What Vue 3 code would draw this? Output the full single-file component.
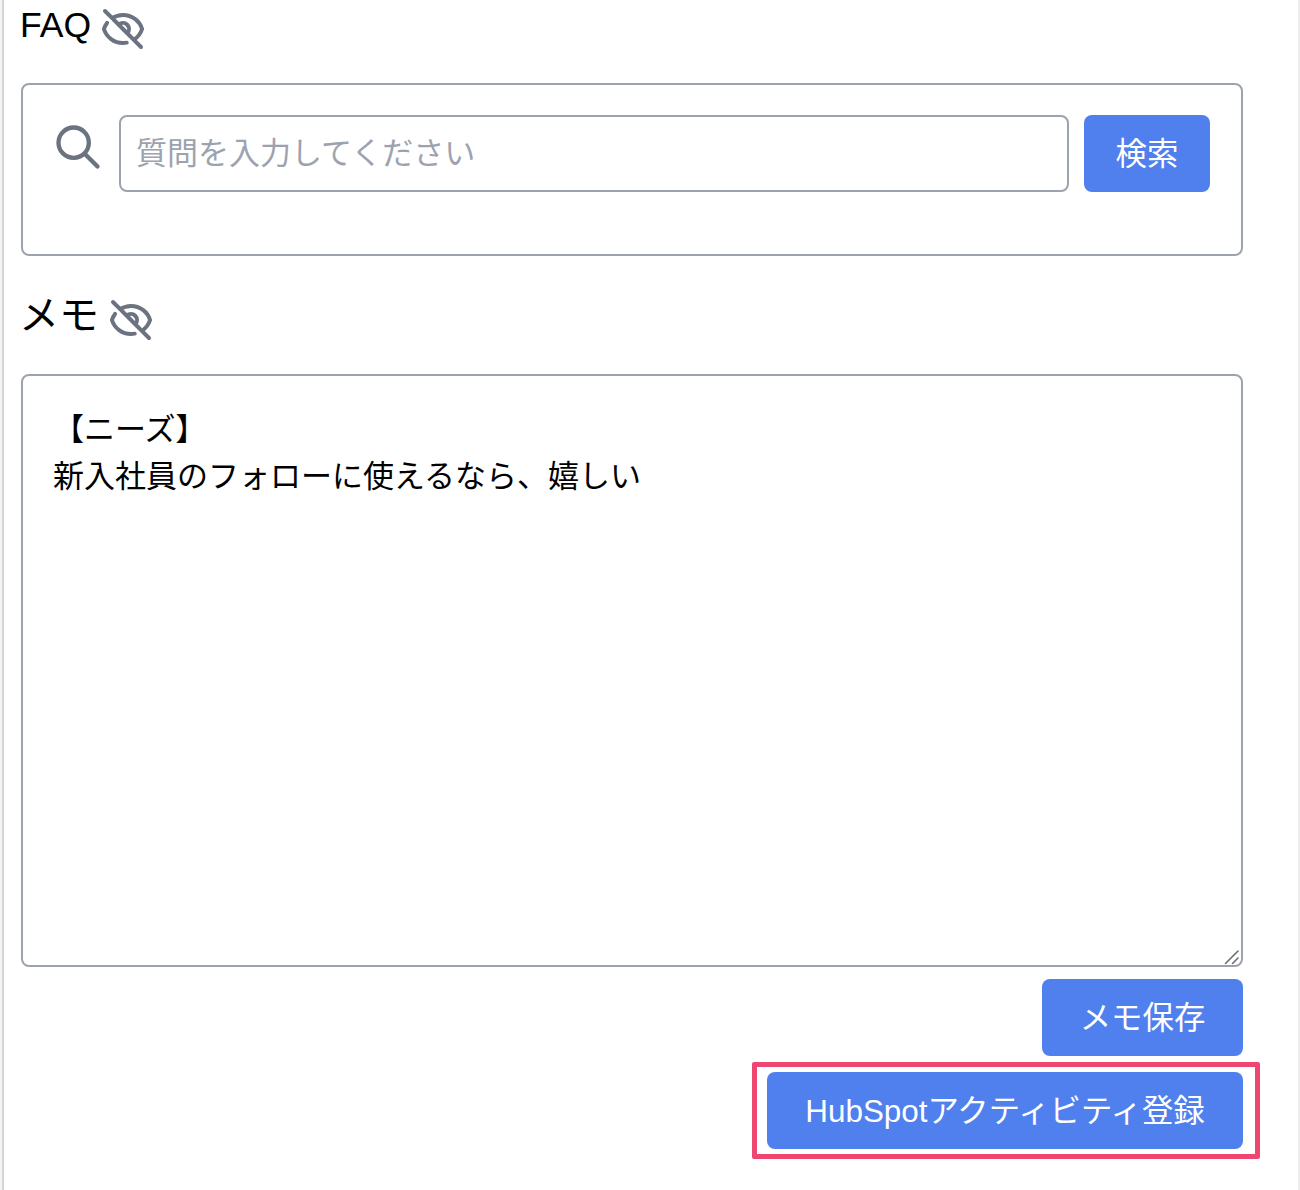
<template>
  <div class="page">
    <div class="content">
      <h2 class="heading faq-heading">
        <span>FAQ</span>
        <svg class="eye" viewBox="0 0 24 24" fill="none" stroke="currentColor" stroke-width="2" stroke-linecap="round" stroke-linejoin="round">
          <path :d="eyeOff" />
        </svg>
      </h2>

      <div class="search-box">
        <svg class="search-icon" viewBox="0 0 24 24" fill="none" stroke="currentColor" stroke-width="2" stroke-linecap="round" stroke-linejoin="round">
          <path d="M21 21l-6-6m2-5a7 7 0 11-14 0 7 7 0 0114 0z" />
        </svg>
        <input class="search-input" type="text" placeholder="質問を入力してください" />
        <button class="btn search-btn">検索</button>
      </div>

      <h2 class="heading memo-heading">
        <span class="memo-title">メモ</span>
        <svg class="eye" viewBox="0 0 24 24" fill="none" stroke="currentColor" stroke-width="2" stroke-linecap="round" stroke-linejoin="round">
          <path :d="eyeOff" />
        </svg>
      </h2>

      <div class="memo-wrap">
        <textarea class="memo" v-model="memo"></textarea>
        
        <svg class="grip" viewBox="0 0 16 16" fill="none" stroke="#6f6f6f" stroke-width="1.6" stroke-linecap="round">
          <path d="M1.5 14.5L14 2M8.5 14.5L14 9" />
        </svg>
      </div>

      <div class="actions">
        <button class="btn save-btn">メモ保存</button>
        <div class="highlighted">
          <button class="btn hubspot-btn">HubSpotアクティビティ登録</button>
          <div class="highlight"></div>
        </div>
      </div>
    </div>
  </div>
</template>

<script setup>
import { ref } from 'vue'

const eyeOff = 'M13.875 18.825A10.05 10.05 0 0112 19c-4.478 0-8.268-2.943-9.543-7a9.97 9.97 0 011.563-3.029m5.858.908a3 3 0 114.243 4.243M9.878 9.878l4.242 4.242M9.88 9.88l-3.29-3.29m7.532 7.532l3.29 3.29M3 3l3.59 3.59m0 0A9.953 9.953 0 0112 5c4.478 0 8.268 2.943 9.543 7a10.025 10.025 0 01-4.132 5.411m0 0L21 21'

const memo = ref('【ニーズ】\n新入社員のフォローに使えるなら、嬉しい')
</script>

<style>
html,
body {
  margin: 0;
  background: #fff;
}
</style>

<style scoped>
.page {
  width: 1300px;
  height: 1190px;
  box-sizing: border-box;
  overflow: hidden;
  background: linear-gradient(90deg, #f4f4f4 0, #f4f4f4 2px, #d4d4d4 2px, #d4d4d4 4px, #fff 4px);
  border-right: 2px solid #eeeeee;
  font-family: "Liberation Sans", "Noto Sans CJK JP", sans-serif;
  color: #000;
}

.content {
  width: 1222px;
  margin-left: 21px;
}

.heading {
  display: flex;
  align-items: center;
  margin: 0;
  font-weight: 400;
  font-size: 35.5px;
  height: 50px;
}

.faq-heading {
  gap: 8px;
  margin-left: -1px;
}

.memo-heading {
  margin-top: 34px;
  margin-left: -2px;
  gap: 8px;
  font-size: 40px;
}

.memo-title {
  margin-bottom: 6px;
}

.eye {
  width: 48px;
  height: 48px;
  flex: none;
  color: #6b7280;
  margin-top: 8px;
}

.memo-heading .eye {
  margin-top: 10px;
}

.search-box {
  display: flex;
  align-items: flex-start;
  box-sizing: border-box;
  height: 173px;
  margin-top: 33px;
  padding: 30px 31px 0 29px;
  border: 2px solid #9ca3af;
  border-radius: 8px;
}

.search-icon {
  width: 52px;
  height: 52px;
  flex: none;
  margin-top: 6px;
  margin-right: 15px;
  color: #6b7280;
}

.search-input {
  flex: 1;
  min-width: 0;
  box-sizing: border-box;
  height: 77px;
  padding: 0 15px;
  border: 2px solid #9ca3af;
  border-radius: 8px;
  font: inherit;
  font-size: 31px;
  color: #000;
  outline: none;
}

.search-input::placeholder {
  color: #9ca3af;
  opacity: 1;
}

.btn {
  box-sizing: border-box;
  height: 77px;
  border: none;
  border-radius: 8px;
  background: #4f80ee;
  color: #fff;
  font: inherit;
  font-size: 31.4px;
  padding: 0 0 4px;
}

.search-btn {
  flex: none;
  width: 126px;
  margin-left: 15px;
}

.memo-wrap {
  position: relative;
  margin-top: 34px;
}

.memo {
  display: block;
  box-sizing: border-box;
  width: 100%;
  height: 593px;
  padding: 31px 30px;
  border: 2px solid #9ca3af;
  border-radius: 8px;
  font: inherit;
  font-size: 31px;
  line-height: 46.5px;
  color: #000;
  outline: none;
  resize: none;
}

.grip {
  position: absolute;
  right: 3px;
  bottom: 2px;
  width: 16px;
  height: 16px;
  pointer-events: none;
}

.actions {
  display: flex;
  flex-direction: column;
  align-items: flex-end;
  gap: 16px;
  margin-top: 12px;
}

.save-btn {
  width: 201px;
}

.highlighted {
  position: relative;
}

.hubspot-btn {
  display: block;
  width: 476px;
}

.highlight {
  position: absolute;
  top: -10px;
  right: -17px;
  bottom: -10px;
  left: -15px;
  border: 5px solid #ee4671;
  border-radius: 2px;
  pointer-events: none;
}
</style>
